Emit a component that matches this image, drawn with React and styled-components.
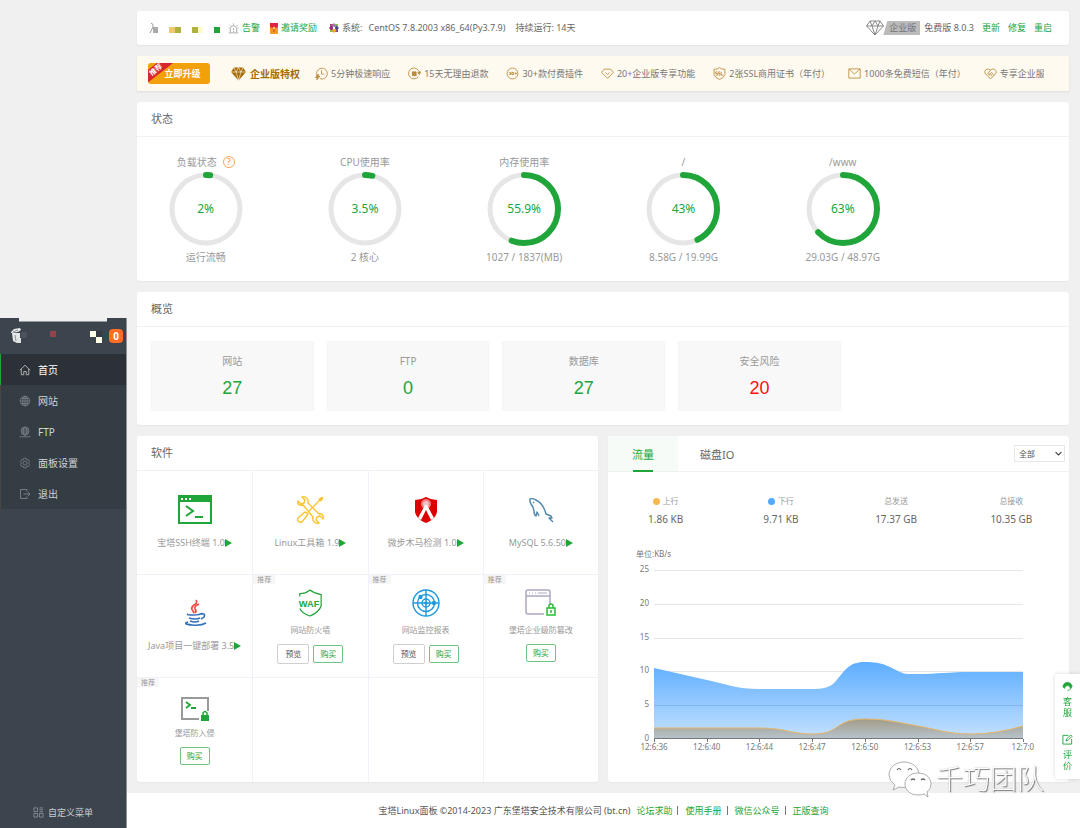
import React, { useState } from 'react'
import styled, { createGlobalStyle } from 'styled-components'

const green = '#20a53a'
const gold = '#b98a3c'
const sans = '"Noto Sans", "Noto Sans CJK SC", sans-serif'

const GlobalStyle = createGlobalStyle`
    * {
        box-sizing: border-box;
    }
    body {
        margin: 0;
        background: #f0f0f0;
        font-family: ${sans};
        font-size: 8px;
        line-height: 12px;
        color: #666;
    }
    button, select {
        font-family: inherit;
    }
    a {
        color: ${green};
        text-decoration: none;
    }
    svg {
        display: block;
        flex: none;
    }
`

/* ---------- layout ---------- */
const Page = styled.div`
    display: flex;
    min-height: 100vh;
`
const Sidebar = styled.aside`
    flex: none;
    width: 127px;
    padding-top: 318px;
    display: flex;
    flex-direction: column;
`
const SidePanel = styled.div`
    flex: 1;
    display: flex;
    flex-direction: column;
    background: #3c444d;
    border-right: 1px solid #8b9197;
`
const SideTop = styled.div`
    height: 36px;
    padding: 0 3px 1px 10px;
    display: flex;
    align-items: center;
    justify-content: space-between;
    position: relative;
    &:before {
        content: '';
        position: absolute;
        top: 0;
        left: 19px;
        right: 19px;
        height: 3px;
        background: #f0f0f0;
        border-bottom: 1px solid #969ba0;
    }
`
const Count = styled.span`
    width: 14px;
    height: 14px;
    border-radius: 4px;
    background: #ff6c22;
    color: #fff;
    font-size: 10px;
    font-weight: bold;
    line-height: 14px;
    text-align: center;
`
const Nav = styled.nav`
    background: #353d44;
`
const NavLink = styled.a`
    display: flex;
    align-items: center;
    gap: 7px;
    height: 31px;
    padding-left: 18px;
    border-left: 1px solid ${p => p.$active ? green : '#4a4543'};
    background: ${p => p.$active ? '#2c3138' : 'transparent'};
    color: ${p => p.$active ? '#fff' : '#d0d3d6'};
    font-size: 10px;
    svg {
        color: ${p => p.$active ? '#a9adb1' : '#7c8389'};
    }
`
const MenuSetting = styled.button`
    margin-top: auto;
    height: 31px;
    border: 0;
    padding: 0;
    background: none;
    color: #c9cdd1;
    font-size: 9px;
    display: flex;
    align-items: center;
    justify-content: center;
    gap: 4px;
    svg {
        color: #8d949b;
    }
`
const Main = styled.div`
    flex: 1;
    min-width: 0;
    display: flex;
    flex-direction: column;
`
const Content = styled.main`
    flex: 1;
    padding: 11px 11px 11px 10px;
    display: flex;
    flex-direction: column;
    gap: 11px;
`
const Card = styled.section`
    background: #fff;
    border-radius: 3px;
    box-shadow: 0 1px 2px rgba(0, 0, 0, 0.04);
    min-width: 0;
`
const CardTitle = styled.h2`
    margin: 0;
    height: 35px;
    padding-left: 14px;
    border-bottom: 1px solid #f1f1f1;
    font-size: 11px;
    font-weight: normal;
    line-height: 34px;
`
const Columns = styled.div`
    flex: 1;
    display: grid;
    grid-template-columns: 1fr 1fr;
    gap: 10px;
`

/* ---------- top bars ---------- */
const TopBar = styled.header`
    height: 34px;
    padding: 0 17px 0 12px;
    display: flex;
    align-items: center;
    background: #fff;
    border-radius: 3px;
    box-shadow: 0 1px 2px rgba(0, 0, 0, 0.05);
    font-size: 9px;
    white-space: nowrap;
`
const TopItem = styled.span`
    display: flex;
    align-items: center;
    gap: 3px;
    margin-right: ${p => p.$gap || 10}px;
`
const TopActions = styled.div`
    margin-left: auto;
    display: flex;
    align-items: center;
    gap: 8px;
`
const Edition = styled.span`
    display: flex;
    align-items: center;
    margin-right: -4px;
    svg {
        margin-right: -1px;
    }
    span {
        height: 14px;
        padding: 0 4px 0 6px;
        background: #bbb;
        color: #777;
        line-height: 14px;
        clip-path: polygon(4px 0, 100% 0, 100% 100%, 0 100%);
    }
`
const Promo = styled.div`
    height: 35px;
    padding: 0 25px 0 11px;
    display: flex;
    align-items: center;
    background: #fffaef;
    box-shadow: 0 1px 2px rgba(0, 0, 0, 0.08);
    white-space: nowrap;
`
const Upgrade = styled.button`
    position: relative;
    flex: none;
    width: 62px;
    height: 21px;
    margin-right: 21px;
    padding: 0 0 0 7px;
    border: 0;
    border-radius: 3px;
    overflow: hidden;
    background: #f2a10b;
    color: #fff;
    font-size: 9px;
    font-weight: bold;
`
const Ribbon = styled.span`
    position: absolute;
    top: 2px;
    left: -14px;
    width: 44px;
    height: 10px;
    background: #d9262c;
    font-size: 7px;
    line-height: 10px;
    transform: rotate(-38deg);
`
const PromoTitle = styled.strong`
    display: flex;
    align-items: center;
    gap: 4px;
    margin-right: 15px;
    color: #a66b06;
    font-size: 10px;
`
const PromoList = styled.ul`
    flex: 1;
    min-width: 0;
    margin: 0;
    padding: 0;
    list-style: none;
    display: flex;
    gap: 18px;
    overflow: hidden;
    color: #777;
    font-size: 9px;
    li {
        display: flex;
        align-items: center;
        gap: 3px;
    }
`

/* ---------- status ---------- */
const Gauges = styled.div`
    display: grid;
    grid-template-columns: repeat(5, 17%);
    margin: 0 6px 0 -11px;
    padding: 17px 0 16px;
    color: #999;
    font-size: 10px;
    line-height: 16px;
`
const GaugeItem = styled.div`
    display: flex;
    flex-direction: column;
    align-items: center;
`
const GaugeTitle = styled.div`
    display: flex;
    align-items: center;
    gap: 6px;
    height: 16px;
`
const Dial = styled.div`
    display: grid;
    place-items: center;
    margin: 2px 0 3px;
    > * {
        grid-area: 1 / 1;
    }
    span {
        color: ${green};
        font-size: 12px;
    }
`
const Help = styled.button`
    width: 12px;
    height: 12px;
    padding: 0;
    border: 1px solid #f9a45c;
    border-radius: 50%;
    background: none;
    color: #f58a2e;
    font-size: 9px;
    line-height: 10px;
`

/* ---------- overview ---------- */
const Overview = styled.div`
    display: grid;
    grid-template-columns: repeat(4, 18%);
    gap: 13px;
    padding: 14px;
`
const OverviewBox = styled.div`
    height: 70px;
    padding-top: 11px;
    background: #f8f8f8;
    border: 1px solid #f4f4f4;
    border-radius: 2px;
    text-align: center;
    color: #999;
    font-size: 10px;
    line-height: 16px;
    a {
        display: block;
        padding-top: 6px;
        color: ${p => p.$risk ? '#f11' : green};
        font-family: "Liberation Sans", sans-serif;
        font-size: 18px;
        line-height: 26px;
    }
`

/* ---------- software ---------- */
const Software = styled(Card)`
    display: flex;
    flex-direction: column;
`
const SoftGrid = styled.div`
    flex: 1;
    display: grid;
    grid-template-columns: repeat(4, 1fr);
    grid-auto-rows: 1fr;
`
const SoftCell = styled.div`
    position: relative;
    min-height: 103px;
    display: flex;
    flex-direction: column;
    align-items: center;
    justify-content: ${p => p.$tag ? 'flex-start' : 'center'};
    padding: ${p => p.$tag ? '12px 0 0' : '0 0 6px'};
    border-left: 1px solid #f1f1f9;
    border-bottom: 1px solid #f1f1f9;
    color: #999;
    font-size: 8px;
    &:nth-child(4n + 1) {
        border-left: 0;
    }
    &:nth-child(n + 9) {
        border-bottom: 0;
    }
`
const SoftIcon = styled.div`
    height: ${p => p.$small ? 32 : 40}px;
    display: grid;
    place-items: center;
`
const SoftName = styled.div`
    display: flex;
    align-items: center;
    margin-top: ${p => p.$small ? 5 : 7}px;
    font-size: ${p => p.$small ? 8 : 9}px;
    line-height: 12px;
    white-space: nowrap;
`
const Tag = styled.span`
    position: absolute;
    top: 0;
    left: 0;
    padding: 0 4px;
    background: #f6f6f6;
    font-size: 7px;
    line-height: 9px;
`
const SoftActions = styled.div`
    display: flex;
    align-items: center;
    gap: 4px;
    margin-top: 8px;
`
const Button = styled.button`
    height: ${p => p.$plain ? 20 : 18}px;
    padding: 0 ${p => p.$plain ? 7 : 6}px;
    background: #fff;
    border: 1px solid ${p => p.$plain ? '#d0d0d0' : '#6fc481'};
    border-radius: 2px;
    color: ${p => p.$plain ? '#555' : green};
    font-size: 8px;
    line-height: 16px;
`

/* ---------- traffic ---------- */
const Tabs = styled.div`
    display: flex;
    align-items: center;
    height: 36px;
    padding-right: 4px;
    border-bottom: 1px solid #f1f1f1;
`
const Tab = styled.button`
    position: relative;
    height: 35px;
    padding: 0 ${p => p.$active ? 24 : 22}px;
    border: 0;
    background: ${p => p.$active ? '#f6fbf7' : 'transparent'};
    color: ${p => p.$active ? green : '#666'};
    font-size: 11px;
    &:after {
        content: '';
        position: absolute;
        left: 25px;
        right: 25px;
        bottom: -1px;
        height: 2px;
        background: ${p => p.$active ? green : 'transparent'};
    }
`
const SelectWrap = styled.label`
    margin-left: auto;
    display: grid;
    align-items: center;
    > * {
        grid-area: 1 / 1;
    }
    svg {
        justify-self: end;
        margin-right: 3px;
        pointer-events: none;
    }
`
const Select = styled.select`
    appearance: none;
    width: 51px;
    height: 17px;
    padding: 0 4px;
    border: 1px solid #e8e8e8;
    border-radius: 0;
    background: #fff;
    color: #555;
    font-size: 8px;
`
const Stats = styled.dl`
    display: grid;
    grid-template-columns: repeat(4, 1fr);
    margin: 0;
    padding: 21px 0 0;
    text-align: center;
    dt {
        display: flex;
        align-items: center;
        justify-content: center;
        gap: 3px;
        height: 16px;
        color: #999;
    }
    dd {
        margin: 0;
        font-size: 10px;
        line-height: 20px;
    }
`
const Dot = styled.i`
    width: 7px;
    height: 7px;
    border-radius: 50%;
    background: ${p => p.$color};
`
const Chart = styled.svg`
    width: 100%;
    margin-top: 16px;
    font-size: 8px;
    fill: #777;
`

/* ---------- footer and floating parts ---------- */
const Footer = styled.footer`
    height: 35px;
    display: flex;
    align-items: center;
    justify-content: center;
    background: #fff;
    color: #555;
    font-size: 9px;
    white-space: nowrap;
    a {
        margin-left: 6px;
    }
    a + a {
        margin-left: 5px;
        padding-left: 7px;
        border-left: 1px solid #777;
        line-height: 9px;
    }
`
const FloatBar = styled.div`
    position: fixed;
    right: 0;
    top: 674px;
    width: 25px;
    height: 105px;
    padding: 7px 0 8px;
    display: flex;
    flex-direction: column;
    justify-content: space-between;
    align-items: center;
    background: #fff;
    border-radius: 3px 0 0 3px;
    box-shadow: 0 0 4px rgba(0, 0, 0, 0.15);
`
const FloatLink = styled.a`
    display: flex;
    flex-direction: column;
    align-items: center;
    gap: 4px;
    width: 12px;
    font-size: 9px;
    line-height: 11px;
    text-align: center;
    word-break: break-all;
`
const Watermark = styled.div`
    position: fixed;
    right: 36px;
    top: 758px;
    display: flex;
    align-items: center;
    gap: 4px;
    color: #fff;
    font-size: 27px;
    font-weight: 300;
    line-height: 42px;
    text-shadow: 1px 1px 1px #777, 0 0 1px #aaa;
    pointer-events: none;
`

/* ---------- icons ---------- */
const Line = ({ size = 12, box = 24, width = 1.6, children, ...rest }) => (
    <svg width={size} height={size} viewBox={`0 0 ${box} ${box}`} fill="none" stroke="currentColor" strokeWidth={width} {...rest}>
        {children}
    </svg>
)
const HomeIcon = () => (
    <Line width={2}><path d="M1.5 12.5 12 2.5l10.5 10M4.5 10v11.5h5V15h5v6.500h5V10" /></Line>
)
const GlobeIcon = () => (
    <Line><circle cx="12" cy="12" r="9.500" /><ellipse cx="12" cy="12" rx="4.500" ry="9.500" /><path d="M12 2.500v19M2.500 12h19M4.500 7h15M4.500 17h15" /></Line>
)
const FtpIcon = () => (
    <Line><circle cx="12" cy="10" r="8" /><ellipse cx="12" cy="10" rx="3.500" ry="8" /><path d="M4 10h16M5 6h14M5 14h14M12 18v3M1 21.500h22" /></Line>
)
const GearIcon = () => (
    <Line>
        <path d="m9.500 2.500 5 0 1 3 3-.5 2.500 4-2 3 2 3-2.500 4-3-.5-1 3h-5l-1-3-3 .5L3 15l2-3-2-3 2.500-4 3 .5z" />
        <circle cx="12" cy="12" r="4" />
    </Line>
)
const ExitIcon = () => (
    <Line width={1.800}><path d="M16 7V3H3v18h13v-4M9 12h13M18 8l4 4-4 4" /></Line>
)
const MenuIcon = () => (
    <Line size={11} width={1.800}><path d="M2 2h8v8H2zM2 14h8v8H2zM14 14h8v8h-8zM14 2h8M14 6h8M14 10h8" /></Line>
)
const BucketIcon = () => (
    <svg width="92" height="18" viewBox="0 0 92 18">
        <path d="m1 5 3-3 6-1 1 2-3 2-7 1zM2 6l8 0 0 9-3 1-4-2z" fill="#e6e7e8" />
        <path d="m3 5 5-2M5 8l1 6" stroke="#8b9197" />
        <path d="M7 11h4v5H7z" fill="#dfe1e3" />
        <path d="M11 5h6v6h-6z" fill="#4a525b" />
        <path d="M40 4h6v6h-6z" fill="#934349" />
        <path d="M80 4h6v6h-6zM86 10h6v6h-6z" fill="#fffee8" />
        <path d="M86 4h6v6h-6z" fill="#333b43" />
    </svg>
)
const UserMosaic = () => (
    <svg width="73" height="13" viewBox="0 0 73 13">
        <path d="M2 1q3 1 2 4l-3 6" fill="none" stroke="#999" />
        <path d="M4 5h5v6H4z" fill="#aaa" />
        <path d="M20 5h6v6h-6z" fill="#efc86e" />
        <path d="M26 5h6v6h-6zM43 5h6v6h-6z" fill="#aeb23c" />
        <path d="M49 5h5v6h-5z" fill="#fdfcd0" />
        <path d="M65 5h6v6h-6z" fill={green} />
    </svg>
)
const AlarmIcon = () => (
    <Line size={11} color="#999" width={1.800}><path d="M5 20v-8a7 6 0 0 1 14 0v8M1.500 21.500h21M12 1v3M3 4l2 2M21 4l-2 2M12 11v4M12 17v2M1 11h2M21 11h2" /></Line>
)
const PacketIcon = () => (
    <svg width="8" height="11" viewBox="0 0 8 11">
        <rect width="8" height="11" rx="1" fill="#f49a24" />
        <path d="M0 0h8v4L4 6 0 4z" fill="#e12345" />
        <circle cx="4" cy="5" r="1.300" fill="#ffd34d" /><path d="M3.500 6h1v3h-1z" fill="#d33a22" />
    </svg>
)
const CentosIcon = () => (
    <svg width="10" height="10" viewBox="0 0 20 20">
        <path d="M10 0l5 5-5 5-5-5z" fill="#9b7bb0" />
        <path d="M2 2h7L2 9z" fill="#b8457f" /><path d="M11 2h7v7z" fill="#8fbf3a" />
        <path d="M20 10l-5 5-5-5 5-5z" fill="#4b4a94" /><path d="M18 11v7h-7z" fill="#8a3f85" />
        <path d="M10 20l-5-5 5-5 5 5z" fill="#efa724" /><path d="M9 18H2v-7z" fill="#8fbf3a" />
        <path d="M0 10l5-5 5 5-5 5z" fill="#932279" />
        <circle cx="10" cy="10" r="2.500" fill="#fff" />
    </svg>
)
const DiamondLine = () => (
    <svg width="18" height="16" viewBox="0 0 36 32" fill="none" stroke="#888" strokeWidth="2">
        <path d="M8 2h20l7 10-17 18L1 12zM1 12h34M8 2l4 10 6 18 6-18 4-10M12 12l6-10 6 10" />
    </svg>
)
const DiamondSolid = () => (
    <svg width="15" height="14" viewBox="0 0 30 28">
        <path d="M6 1h18l6 9-15 17L0 10z" fill="#a66b06" />
        <path d="M0 10h30M6 1l4 9 5 16 5-16 4-9M10 10l5-9 5 9" fill="none" stroke="#fffaef" strokeWidth="1.200" />
    </svg>
)
const promoPaths = {
    clock: <><path d="M4 17a10 10 0 1 1 5 4.500M12 6v7h5" /><path d="m5 14-4 6h4l-2 4 6-7H5l2-3z" fill="currentColor" /></>,
    refund: <><path d="M19 18a10 10 0 1 1 2-7" /><path d="M8 9h7v7H8z" fill="currentColor" /><path d="m18 10 3 4 2-5z" fill="currentColor" /></>,
    plugin: <><circle cx="12" cy="12" r="10" /><path d="M6 10h3v4H6M7 12h2M11 10h3v4h-3zM16 12h4M18 10v4" /></>,
    gem: <path d="M6 4h12l5 6-11 11L1 10zM8 10l4 4 4-4" />,
    ssl: <><path d="M2 4q6 1 10-3 4 4 10 3v10q-2 6-10 9-8-3-10-9z" /><path d="M8 9H5v3h3v3H5M13 9h-3v3h3v3h-3M15 9v6h4" /></>,
    mail: <path d="M1.500 3.500h21v17h-21zM2 4l10 9L22 4" />,
    heart: <path d="M12 22 3 13C-2 7 6 0 12 6c6-6 14 1 9 7zM12 6l-5 6q2 3 5 0l2-2 4 5M9 16l3-3 3 4" />,
}
const softIcons = {
    terminal: (
        <svg width="34" height="30" viewBox="0 0 34 30">
            <rect x="1" y="1" width="32" height="27" fill="#fff" stroke={green} strokeWidth="2" />
            <path d="M0 1h34v6H0z" fill={green} />
            <path d="M3 3h2v2H3zM7 3h2v2H7zM11 3h2v2h-2z" fill="#fff" />
            <path d="m8 11 7 5-7 5M17 22h8" fill="none" stroke={green} strokeWidth="2" />
        </svg>
    ),
    tools: (
        <svg width="28" height="28" viewBox="0 0 28 28" fill="none" stroke="#fbc530" strokeWidth="1.400" strokeLinejoin="round">
            <path d="m2 5 3 3 3-1 1-3-3-3c4-1 7 2 6 6l11 11c4-1 5 3 4 5l-3-3-3 1-1 3 3 3c-4 1-7-2-6-6L7 9C3 10 1 8 2 5z" />
            <path d="M26 2 13 15M11 17l1 1-6 8q-2 1-4-1-1-2 0-3l7-6z" fill="#fff" /><path d="m23 4 3-2-2 3" strokeWidth="2.500" />
        </svg>
    ),
    threat: (
        <svg width="24" height="26" viewBox="0 0 24 26">
            <path d="M12 0q5 3 11 3v12q-1 7-11 11Q2 22 1 15V3q6 0 11-3z" fill="#dc0000" />
            <circle cx="12" cy="7" r="5" fill="#f27d80" /><circle cx="12" cy="7" r="3" fill="#fbc1c3" />
            <path d="m11 8h2l7 13-3 2-5-10-5 10-3-2z" fill="#fff" />
        </svg>
    ),
    mysql: (
        <svg width="26" height="26" viewBox="0 0 26 26" fill="none" stroke="#4f87ab" strokeWidth="1.400" strokeLinejoin="round">
            <path d="M5 10Q1 5 2 2q2-1 6 1 7 3 10 14l5 2 1 2-3 0 4 4M5 10l1 4q0 4 2 5l1-4 2 4" /><path d="m5 5 1 1" />
        </svg>
    ),
    java: (
        <svg width="24" height="28" viewBox="0 0 24 28" fill="none" strokeWidth="1.700">
            <path d="M13 1q2 3-2 5-4 3-1 6l1 2M16 5q-5 2-4 5 2 2 0 4" stroke="#ef4b3f" />
            <path d="M5 15q-2 1 6 1 6 0 8-2M18 15q5-1 3 3-1 1-3 2M6 19q6 2 11 0M7 22q5 2 9 0M5 23q-6 2 4 3 9 1 14-2" stroke="#3470b8" />
        </svg>
    ),
    waf: (
        <svg width="26" height="28" viewBox="0 0 28 30" fill="none" stroke={green} strokeWidth="1.300">
            <path d="M3 8V5q6 0 11-4 5 4 12 5v12q-2 7-12 11Q5 26 3 21" />
            <text x="13" y="19" textAnchor="middle" fontSize="10" fontWeight="bold" fontFamily="Liberation Sans" fill={green} stroke="none">WAF</text>
        </svg>
    ),
    radar: (
        <svg width="28" height="28" viewBox="0 0 28 28" fill="none" stroke="#1c9ae0" strokeWidth="1.400">
            <circle cx="14" cy="14" r="13" /><circle cx="14" cy="14" r="8.500" /><circle cx="14" cy="14" r="4" />
            <path d="M14 1v26M1 14h26" /><g fill="#1c9ae0"><circle cx="8.500" cy="8" r="1.500" /><circle cx="22" cy="14" r="1.500" /><circle cx="14" cy="14" r="1" /></g>
        </svg>
    ),
    tamper: (
        <svg width="32" height="28" viewBox="0 0 32 28" fill="none">
            <path d="M19 25H3q-2 0-2-2V3q0-2 2-2h20q2 0 2 2v12M1 7h24" stroke="#aaa9c2" strokeWidth="1.500" />
            <path d="M4 4h1M7 4h1M10 4h1M13 4h9" stroke="#aaa9c2" />
            <path d="M22 19h8v7h-8zM24 19v-2q0-2 2-2t2 2v2M26 21v3" stroke="#2dbb38" strokeWidth="1.500" />
        </svg>
    ),
    intrusion: (
        <svg width="28" height="32" viewBox="0 -7 28 32" fill="none">
            <path d="M18 22H1V1h26v13" stroke="#999" strokeWidth="2" />
            <path d="m5 5 4 3-4 3M10 11h5" stroke={green} strokeWidth="1.800" />
            <path d="M20 18h8v6h-8z" fill={green} /><path d="M22 18v-2q2-3 4 0v2" stroke={green} strokeWidth="1.500" />
        </svg>
    ),
}
const Play = () => <svg width="7" height="8" viewBox="0 0 7 8"><path d="m0 0 7 4-7 4z" fill={green} /></svg>

/* ---------- data ---------- */
const navItems = [
    { name: '首页', icon: <HomeIcon />, active: true },
    { name: '网站', icon: <GlobeIcon /> },
    { name: 'FTP', icon: <FtpIcon /> },
    { name: '面板设置', icon: <GearIcon /> },
    { name: '退出', icon: <ExitIcon /> },
]
const promos = [
    ['clock', '5分钟极速响应'],
    ['refund', '15天无理由退款'],
    ['plugin', '30+款付费插件'],
    ['gem', '20+企业版专享功能'],
    ['ssl', '2张SSL商用证书（年付）'],
    ['mail', '1000条免费短信（年付）'],
    ['heart', '专享企业服'],
]
const gauges = [
    { title: '负载状态', value: 2, desc: '运行流畅', help: true },
    { title: 'CPU使用率', value: 3.5, desc: '2 核心' },
    { title: '内存使用率', value: 55.9, desc: '1027 / 1837(MB)' },
    { title: '/', value: 43, desc: '8.58G / 19.99G' },
    { title: '/www', value: 63, desc: '29.03G / 48.97G' },
]
const overview = [['网站', 27], ['FTP', 0], ['数据库', 27], ['安全风险', 20]]
const softs = [
    { name: '宝塔SSH终端 1.0', icon: 'terminal' },
    { name: 'Linux工具箱 1.9', icon: 'tools' },
    { name: '微步木马检测 1.0', icon: 'threat' },
    { name: 'MySQL 5.6.50', icon: 'mysql' },
    { name: 'Java项目一键部署 3.5', icon: 'java' },
    { name: '网站防火墙', icon: 'waf', tag: true, preview: true },
    { name: '网站监控报表', icon: 'radar', tag: true, preview: true },
    { name: '堡塔企业级防篡改', icon: 'tamper', tag: true },
    { name: '堡塔防入侵', icon: 'intrusion', tag: true },
    {}, {}, {},
]
const times = ['12:6:36', '12:6:40', '12:6:44', '12:6:47', '12:6:50', '12:6:53', '12:6:57', '12:7:0']
const downLine = 'M46 123C64 127 81 131 99 135S129 144 151 144H204C224 144 226 138 232 131S242 117 257 117C275 117 282 122 290 126S300 129 310 129C328 129 342 127 362 127H415'
const upLine = 'M46 183H151C177 183 184 189 204 189C234 189 225 174 257 174C280 174 292 178 310 181S340 189 362 189Q388 189 415 181'

function Gauge({ title, value, desc, help }) {
    return (
        <GaugeItem>
            <GaugeTitle>{title}{help && <Help aria-label="help">?</Help>}</GaugeTitle>
            <Dial>
                <svg width="74" height="74" viewBox="0 0 74 74" fill="none">
                    <circle cx="37" cy="37" r="34" stroke="#e6e6e6" strokeWidth="5" />
                    <circle cx="37" cy="37" r="34" stroke={green} strokeWidth="6" strokeLinecap="round"
                        pathLength="100" strokeDasharray={`${value} 100`} transform="rotate(-90 37 37)" />
                </svg>
                <span>{value}%</span>
            </Dial>
            {desc}
        </GaugeItem>
    )
}

function Soft({ name, icon, tag, preview }) {
    if (!name) return <SoftCell />
    return (
        <SoftCell $tag={tag}>
            {tag && <Tag>推荐</Tag>}
            <SoftIcon $small={tag}>{softIcons[icon]}</SoftIcon>
            <SoftName $small={tag}>{name}{!tag && <Play />}</SoftName>
            {tag && (
                <SoftActions>
                    {preview && <Button $plain>预览</Button>}
                    <Button>购买</Button>
                </SoftActions>
            )}
        </SoftCell>
    )
}

function TrafficChart() {
    return (
        <Chart viewBox="0 0 461 210">
            <defs>
                <linearGradient id="down" x1="0" y1="0" x2="0" y2="1">
                    <stop offset="0" stopColor="#5dadff" /><stop offset="1" stopColor="#c4e1ff" />
                </linearGradient>
                <linearGradient id="up" x1="0" y1="0" x2="0" y2="1">
                    <stop offset="0" stopColor="#a39c88" /><stop offset="1" stopColor="#b6c2cb" />
                </linearGradient>
            </defs>
            <text x="28" y="12">单位:KB/s</text>
            {[25, 20, 15, 10, 5, 0].map((n, i) => (
                <g key={n}>
                    <text x="41" y={27 + i * 33.8} textAnchor="end">{n}</text>
                    {n > 0 && <path d={`M46 ${Math.round(25 + i * 33.8) + 0.5}h369`} stroke="#e6e6e6" />}
                </g>
            ))}
            <path d={`${downLine}V193H46z`} fill="url(#down)" />
            <path d="M46 160.500h369" stroke="#7fb5ea" />
            <path d={`${upLine}V193H46z`} fill="url(#up)" />
            <path d={upLine} fill="none" stroke="#e6b566" />
            <path d="M46 193.500h369" stroke="#777" />
            {times.map((t, i) => (
                <g key={t}>
                    <path d={`M${Math.round(46 + i * 52.7) + 0.5} 194v3`} stroke="#777" />
                    <text x={46 + i * 52.7} y="205" textAnchor="middle">{t}</text>
                </g>
            ))}
        </Chart>
    )
}

export default function App() {
    const [tab, setTab] = useState('net')
    return (
        <Page>
            <GlobalStyle />
            <Sidebar>
                <SidePanel>
                    <SideTop><BucketIcon /><Count>0</Count></SideTop>
                    <Nav>
                        {navItems.map(item => (
                            <NavLink key={item.name} href="#" $active={item.active}>{item.icon}{item.name}</NavLink>
                        ))}
                    </Nav>
                    <MenuSetting><MenuIcon />自定义菜单</MenuSetting>
                </SidePanel>
            </Sidebar>
            <Main>
                <Content>
                    <TopBar>
                        <TopItem $gap={6}><UserMosaic /></TopItem>
                        <TopItem><AlarmIcon /><a href="#">告警</a></TopItem>
                        <TopItem $gap={12}><PacketIcon /><a href="#">邀请奖励</a></TopItem>
                        <TopItem $gap={6}><CentosIcon />系统:</TopItem>
                        <TopItem>CentOS 7.8.2003 x86_64(Py3.7.9)</TopItem>
                        <span>持续运行: 14天</span>
                        <TopActions>
                            <Edition><DiamondLine /><span>企业版</span></Edition>
                            <span>免费版 8.0.3</span>
                            <a href="#">更新</a>
                            <a href="#">修复</a>
                            <a href="#">重启</a>
                        </TopActions>
                    </TopBar>
                    <Promo>
                        <Upgrade><Ribbon>推荐</Ribbon>立即升级</Upgrade>
                        <PromoTitle><DiamondSolid />企业版特权</PromoTitle>
                        <PromoList>
                            {promos.map(([icon, text]) => (
                                <li key={icon}><Line size={13} color={gold}>{promoPaths[icon]}</Line>{text}</li>
                            ))}
                        </PromoList>
                    </Promo>
                    <Card>
                        <CardTitle>状态</CardTitle>
                        <Gauges>{gauges.map(g => <Gauge key={g.title} {...g} />)}</Gauges>
                    </Card>
                    <Card>
                        <CardTitle>概览</CardTitle>
                        <Overview>
                            {overview.map(([name, n]) => (
                                <OverviewBox key={name} $risk={name === '安全风险'}>{name}<a href="#">{n}</a></OverviewBox>
                            ))}
                        </Overview>
                    </Card>
                    <Columns>
                        <Software>
                            <CardTitle>软件</CardTitle>
                            <SoftGrid>{softs.map((s, i) => <Soft key={i} {...s} />)}</SoftGrid>
                        </Software>
                        <Card>
                            <Tabs>
                                <Tab $active={tab === 'net'} onClick={() => setTab('net')}>流量</Tab>
                                <Tab $active={tab === 'disk'} onClick={() => setTab('disk')}>磁盘IO</Tab>
                                <SelectWrap>
                                    <Select aria-label="网卡"><option>全部</option></Select>
                                    <Line size={7} width={4} color="#444"><path d="m2 7 10 10L22 7" /></Line>
                                </SelectWrap>
                            </Tabs>
                            <Stats>
                                <div><dt><Dot $color="#f7b851" />上行</dt><dd>1.86 KB</dd></div>
                                <div><dt><Dot $color="#52a9ff" />下行</dt><dd>9.71 KB</dd></div>
                                <div><dt>总发送</dt><dd>17.37 GB</dd></div>
                                <div><dt>总接收</dt><dd>10.35 GB</dd></div>
                            </Stats>
                            <TrafficChart />
                        </Card>
                    </Columns>
                </Content>
                <Footer>
                    <span>宝塔Linux面板 ©2014-2023 广东堡塔安全技术有限公司 (bt.cn)</span>
                    <a href="#">论坛求助</a>
                    <a href="#">使用手册</a>
                    <a href="#">微信公众号</a>
                    <a href="#">正版查询</a>
                </Footer>
            </Main>
            <FloatBar>
                <FloatLink href="#">
                    <Line size={11}>
                        <path d="M2 13a10 10 0 0 1 20 0l-4 3q0-6-6-6t-6 6z" fill="currentColor" /><path d="M20 15q-2 6-8 6" />
                    </Line>
                    客服
                </FloatLink>
                <FloatLink href="#">
                    <Line size={11} width={2}><path d="M14 3H2v19h19V11M9 15l1-4 9-9 3 3-9 9z" /></Line>
                    评价
                </FloatLink>
            </FloatBar>
            <Watermark>
                <svg width="44" height="38" viewBox="0 0 44 38" fill="#fff" stroke="#999" strokeWidth="0.800">
                    <path d="M16 2C7 2 1 8 1 15q0 6 6 10l-2 5 6-3q4 1 8 0 12-2 12-12C31 8 25 2 16 2z" />
                    <path d="M30 13c-8 0-13 5-13 11s5 11 13 11q4 0 6-1l4 3-1-5q4-3 4-8c0-6-5-11-13-11z" />
                    <path d="M9 10q2-3 4 0M20 10q2-3 4 0M23 20q2-2 4 0M33 20q2-2 4 0" fill="none" stroke="#666" strokeWidth="1.200" />
                </svg>
                千巧团队
            </Watermark>
        </Page>
    )
}
